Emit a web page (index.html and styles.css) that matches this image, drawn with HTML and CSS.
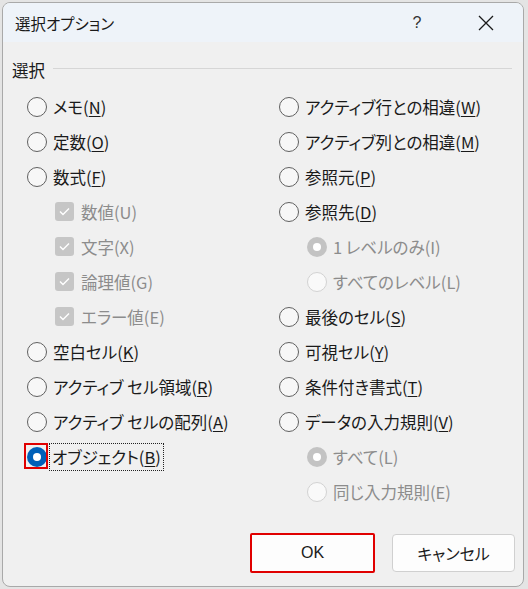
FILE: index.html
```html
<!DOCTYPE html>
<html lang="ja">
<head>
<meta charset="utf-8">
<link rel="stylesheet" href="styles.css">
</head>
<body>
<div class="dialog">
  <div class="titlebar">
    <span class="title">選択オプション</span>
    <span class="help">?</span>
    <span class="close"><svg width="16" height="16" viewBox="0 0 16 16"><path d="M1 1L15 15M15 1L1 15" stroke="#1a1a1a" stroke-width="1.3" fill="none"/></svg></span>
  </div>
  <div class="group-head"><span class="group-label">選択</span><span class="group-line"></span></div>
  <div class="columns">
    <div class="col col-left">
      <div class="row"><span class="radio"></span><span class="label">メモ(<u>N</u>)</span></div>
      <div class="row"><span class="radio"></span><span class="label">定数(<u>O</u>)</span></div>
      <div class="row"><span class="radio"></span><span class="label">数式(<u>F</u>)</span></div>
      <div class="row sub disabled"><span class="check"><svg width="11" height="9" viewBox="0 0 11 9"><path d="M1 4.5L4 7.5L10 1.5" stroke="#fff" stroke-width="1.4" fill="none"/></svg></span><span class="label">数値(U)</span></div>
      <div class="row sub disabled"><span class="check"><svg width="11" height="9" viewBox="0 0 11 9"><path d="M1 4.5L4 7.5L10 1.5" stroke="#fff" stroke-width="1.4" fill="none"/></svg></span><span class="label">文字(X)</span></div>
      <div class="row sub disabled"><span class="check"><svg width="11" height="9" viewBox="0 0 11 9"><path d="M1 4.5L4 7.5L10 1.5" stroke="#fff" stroke-width="1.4" fill="none"/></svg></span><span class="label">論理値(G)</span></div>
      <div class="row sub disabled"><span class="check"><svg width="11" height="9" viewBox="0 0 11 9"><path d="M1 4.5L4 7.5L10 1.5" stroke="#fff" stroke-width="1.4" fill="none"/></svg></span><span class="label">エラー値(E)</span></div>
      <div class="row"><span class="radio"></span><span class="label">空白セル(<u>K</u>)</span></div>
      <div class="row"><span class="radio"></span><span class="label">アクティブ セル領域(<u>R</u>)</span></div>
      <div class="row"><span class="radio"></span><span class="label">アクティブ セルの配列(<u>A</u>)</span></div>
      <div class="row"><span class="radio-wrap"><span class="radio checked"></span><span class="mark"></span></span><span class="label focus">オブジェクト(<u>B</u>)</span></div>
    </div>
    <div class="col col-right">
      <div class="row"><span class="radio"></span><span class="label">アクティブ行との相違(<u>W</u>)</span></div>
      <div class="row"><span class="radio"></span><span class="label">アクティブ列との相違(<u>M</u>)</span></div>
      <div class="row"><span class="radio"></span><span class="label">参照元(<u>P</u>)</span></div>
      <div class="row"><span class="radio"></span><span class="label">参照先(<u>D</u>)</span></div>
      <div class="row sub disabled"><span class="radio dis-checked"></span><span class="label">1 レベルのみ(I)</span></div>
      <div class="row sub disabled"><span class="radio dis"></span><span class="label">すべてのレベル(L)</span></div>
      <div class="row"><span class="radio"></span><span class="label">最後のセル(<u>S</u>)</span></div>
      <div class="row"><span class="radio"></span><span class="label">可視セル(<u>Y</u>)</span></div>
      <div class="row"><span class="radio"></span><span class="label">条件付き書式(<u>T</u>)</span></div>
      <div class="row"><span class="radio"></span><span class="label">データの入力規則(<u>V</u>)</span></div>
      <div class="row sub disabled"><span class="radio dis-checked"></span><span class="label">すべて(L)</span></div>
      <div class="row sub disabled"><span class="radio dis"></span><span class="label">同じ入力規則(E)</span></div>
    </div>
  </div>
  <div class="buttons">
    <button class="btn btn-ok">OK</button>
    <button class="btn">キャンセル</button>
  </div>
</div>
</body>
</html>
```

FILE: styles.css
```css
html, body {
  margin: 0;
  padding: 0;
}
body {
  width: 528px;
  height: 589px;
  background: #e4e4e4;
  font-family: "Noto Sans CJK JP", "Noto Sans", sans-serif;
  font-feature-settings: "palt";
  color: #1a1a1a;
  overflow: hidden;
}
.dialog {
  box-sizing: border-box;
  margin: 2px 0 0 2px;
  width: 522px;
  height: 585px;
  background: #f0f0f0;
  border: 1px solid #a9a9a9;
  border-radius: 8px;
  overflow: hidden;
  display: flex;
  flex-direction: column;
}
.titlebar {
  height: 39px;
  background: #eef3f9;
  display: flex;
  align-items: center;
  flex-shrink: 0;
}
.title {
  font-size: 15.5px;
  padding-left: 12px;
  flex: 1;
}
.help {
  font-size: 16px;
  font-family: "Liberation Sans", sans-serif;
  color: #333;
  width: 16px;
  text-align: center;
  margin-right: 53px;
}
.close {
  width: 16px;
  height: 16px;
  display: flex;
  margin-right: 29px;
}
.group-head {
  margin-top: 16px;
  height: 24px;
  display: flex;
  align-items: center;
  padding-left: 9px;
  padding-right: 11px;
}
.group-label {
  font-size: 16.5px;
  margin-right: 8px;
  line-height: 24px;
}
.group-line {
  flex: 1;
  height: 1px;
  background: #d6d6d6;
  margin-top: -3px;
}
.columns {
  display: flex;
  margin-top: 7px;
}
.col-left {
  width: 252px;
  padding-left: 24px;
}
.col-right {
  flex: 1;
}
.row {
  height: 35px;
  display: flex;
  align-items: center;
  font-size: 16.5px;
}
.row.sub {
  padding-left: 28px;
}
.label {
  margin-left: 6px;
  line-height: 24px;
  white-space: nowrap;
}
.label u {
  text-underline-offset: 2px;
}
.disabled .label {
  color: #8c8c8c;
}
.radio {
  box-sizing: border-box;
  width: 20px;
  height: 20px;
  border-radius: 50%;
  border: 1px solid #606060;
  background: #f7f7f7;
  flex-shrink: 0;
  display: flex;
  align-items: center;
  justify-content: center;
}
.radio.checked {
  border: none;
  background: #0060b8;
}
.radio.checked::after,
.radio.dis-checked::after {
  content: "";
  width: 8px;
  height: 8px;
  border-radius: 50%;
  background: #fff;
}
.radio.dis-checked {
  border: none;
  background: #c3c3c3;
}
.radio.dis {
  border-color: #d2d2d2;
  background: #f9f9f9;
}
.radio-wrap {
  position: relative;
  display: flex;
}
.mark {
  position: absolute;
  left: -3px;
  top: -4px;
  width: 20px;
  height: 22px;
  border: 2px solid #e00000;
}
.label.focus {
  margin-left: 4px;
  padding: 0 1px;
  outline: 1px dotted #222;
  outline-offset: 1px;
}
.check {
  box-sizing: border-box;
  width: 19px;
  height: 19px;
  border-radius: 3px;
  background: #c6c6c6;
  display: flex;
  align-items: center;
  justify-content: center;
  flex-shrink: 0;
}
.check + .label {
  margin-left: 7px;
}
.buttons {
  display: flex;
  justify-content: flex-end;
  align-items: center;
  gap: 17px;
  padding-right: 8px;
  margin-top: 24px;
}
.btn {
  box-sizing: border-box;
  width: 123px;
  height: 38px;
  border: 1px solid #d0d0d0;
  border-radius: 4px;
  background: #fdfdfd;
  font-family: "Noto Sans CJK JP", "Noto Sans", sans-serif;
  font-feature-settings: "palt";
  font-size: 16px;
  color: #1a1a1a;
  padding: 0;
}
.btn-ok {
  width: 125px;
  height: 40px;
  border: 2px solid #e00000;
  border-radius: 2px;
  font-family: "Liberation Sans", sans-serif;
}
```
